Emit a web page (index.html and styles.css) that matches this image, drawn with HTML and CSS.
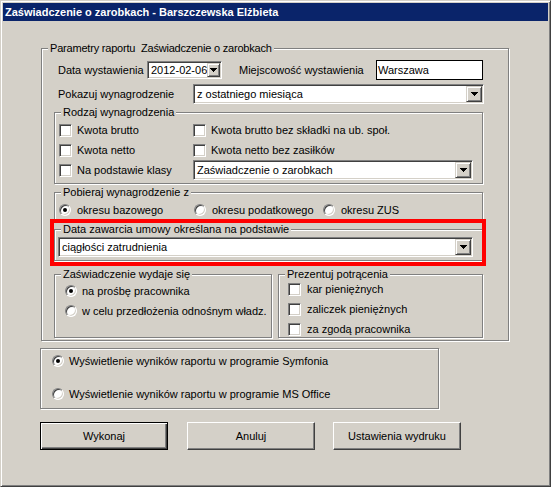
FILE: index.html
```html
<!DOCTYPE html>
<html lang="pl">
<head>
<meta charset="utf-8">
<title>Zaświadczenie o zarobkach</title>
<link rel="stylesheet" href="styles.css">
</head>
<body>
<div class="window">
  <div class="titlebar">Zaświadczenie o zarobkach - Barszczewska Elżbieta</div>
  <div class="client">
    <fieldset class="group outer">
      <legend>Parametry raportu  Zaświadczenie o zarobkach</legend>
      <div class="row r1">
        <span class="l-data">Data wystawienia</span>
        <div class="field date"><span class="val">2012-02-06</span><span class="dd dd-small"><svg width="7" height="4" viewBox="0 0 7 4"><path d="M0 0h7v1H0zM1 1h5v1H1zM2 2h3v1H2zM3 3h1v1H3z"/></svg></span></div>
        <span class="l-miejsc">Miejscowość wystawienia</span>
        <div class="edit">Warszawa</div>
      </div>
      <div class="row r2">
        <span class="l-pokaz">Pokazuj wynagrodzenie</span>
        <div class="field combo c-pokaz"><span class="val">z ostatniego miesiąca</span><span class="dd"><svg width="7" height="4" viewBox="0 0 7 4"><path d="M0 0h7v1H0zM1 1h5v1H1zM2 2h3v1H2zM3 3h1v1H3z"/></svg></span></div>
      </div>

      <fieldset class="group inner rodzaj">
        <legend>Rodzaj wynagrodzenia</legend>
        <div class="grid2">
          <div class="chk"><span class="box"></span>Kwota brutto</div>
          <div class="chk"><span class="box"></span>Kwota brutto bez składki na ub. społ.</div>
          <div class="chk"><span class="box"></span>Kwota netto</div>
          <div class="chk"><span class="box"></span>Kwota netto bez zasiłków</div>
          <div class="chk"><span class="box"></span>Na podstawie klasy</div>
          <div class="field combo c-klasa"><span class="val">Zaświadczenie o zarobkach</span><span class="dd"><svg width="7" height="4" viewBox="0 0 7 4"><path d="M0 0h7v1H0zM1 1h5v1H1zM2 2h3v1H2zM3 3h1v1H3z"/></svg></span></div>
        </div>
      </fieldset>

      <fieldset class="group inner pobieraj">
        <legend>Pobieraj wynagrodzenie z</legend>
        <div class="row pob-row">
          <div class="opt o1"><span class="radio on"></span>okresu bazowego</div>
          <div class="opt o2"><span class="radio"></span>okresu podatkowego</div>
          <div class="opt"><span class="radio"></span>okresu ZUS</div>
        </div>
      </fieldset>

      <fieldset class="group inner zawarcia">
        <legend>Data zawarcia umowy określana na podstawie</legend>
        <div class="field combo c-zawarcia"><span class="val">ciągłości zatrudnienia</span><span class="dd"><svg width="7" height="4" viewBox="0 0 7 4"><path d="M0 0h7v1H0zM1 1h5v1H1zM2 2h3v1H2zM3 3h1v1H3z"/></svg></span></div>
      </fieldset>

      <div class="pair">
        <fieldset class="group zas">
          <legend>Zaświadczenie wydaje się</legend>
          <div class="zas-rows">
            <div class="row"><div class="opt"><span class="radio on"></span>na prośbę pracownika</div></div>
            <div class="row"><div class="opt"><span class="radio"></span>w celu przedłożenia odnośnym władz.</div></div>
          </div>
        </fieldset>
        <fieldset class="group prez">
          <legend>Prezentuj potrącenia</legend>
          <div class="prez-rows">
            <div class="row"><div class="chk wide"><span class="box"></span>kar pieniężnych</div></div>
            <div class="row"><div class="chk wide"><span class="box"></span>zaliczek pieniężnych</div></div>
            <div class="row"><div class="chk wide"><span class="box"></span>za zgodą pracownika</div></div>
          </div>
        </fieldset>
      </div>
    </fieldset>

    <div class="sym">
      <div class="row"><div class="opt"><span class="radio on"></span>Wyświetlenie wyników raportu w programie Symfonia</div></div>
      <div class="row s2"><div class="opt"><span class="radio"></span>Wyświetlenie wyników raportu w programie MS Office</div></div>
    </div>

    <div class="buttons">
      <div class="btn default">Wykonaj</div>
      <div class="btn b2">Anuluj</div>
      <div class="btn b3">Ustawienia wydruku</div>
    </div>
  </div>
  <div class="annot"></div>
</div>
</body>
</html>
```

FILE: styles.css
```css
* { box-sizing: border-box; }
html, body { margin: 0; padding: 0; background: #d4d0c8; }
body {
  font-family: "Liberation Sans", Arial, sans-serif;
  font-size: 11px;
  color: #000;
}

.window {
  position: relative;
  width: 551px;
  height: 487px;
  padding: 2px;
  background: #d4d0c8;
  border: 1px solid;
  border-color: #d4d0c8 #404040 #404040 #d4d0c8;
  box-shadow: inset 1px 1px 0 #fff, inset -1px -1px 0 #808080;
  overflow: hidden;
}

.titlebar {
  height: 18px;
  line-height: 18px;
  padding-left: 2px;
  background: #0a246a;
  color: #fff;
  font-weight: bold;
  white-space: nowrap;
}

.client { padding-left: 37px; }

/* etched group frame */
.group {
  margin: 0;
  padding: 0;
  min-width: 0;
  border: 1px solid #808080;
  box-shadow: inset 1px 1px 0 #fff, 1px 1px 0 #fff;
}
.group > legend {
  margin-left: 6px;
  padding: 0 2px;
  line-height: 13px;
  background: #d4d0c8;
  white-space: pre;
}

.outer { margin: 21px 0 0 1px; width: 468px; padding-bottom: 2px; }
.outer > legend { letter-spacing: -0.2px; }

.row { display: flex; align-items: center; height: 20px; }
.r1 { margin-top: 5px; padding-left: 16px; }
.r2 { margin-top: 4px; padding-left: 16px; }
.l-data { width: 89px; }
.l-miejsc { width: 137px; margin-left: 17px; }
.l-pokaz { width: 135px; }

/* sunken field */
.field {
  display: flex;
  align-items: center;
  padding: 1px;
  background: #fff;
  border: 1px solid;
  border-color: #808080 #fff #fff #808080;
  box-shadow: inset 1px 1px 0 #404040, inset -1px -1px 0 #d4d0c8;
  white-space: nowrap;
}
.field .val { flex: 1; padding-left: 2px; overflow: hidden; }
.combo { height: 20px; }
.date { width: 75px; height: 18px; }
.c-pokaz { width: 291px; }
.c-klasa { width: 280px; }
.c-zawarcia { width: 415px; margin-left: 3px; }

.dd {
  width: 16px;
  height: 16px;
  flex: none;
  display: flex;
  align-items: center;
  justify-content: center;
  background: #d4d0c8;
  border: 1px solid;
  border-color: #d4d0c8 #404040 #404040 #d4d0c8;
  box-shadow: inset 1px 1px 0 #fff, inset -1px -1px 0 #808080;
}
.dd svg { display: block; fill: #000; shape-rendering: crispEdges; }
.dd-small { width: 13px; height: 14px; }

.edit {
  width: 107px;
  height: 20px;
  line-height: 18px;
  padding-left: 1px;
  background: #fff;
  border: 1px solid #000;
}

.inner { margin-left: 12px; width: 429px; }
.rodzaj { margin-top: 2px; padding: 1px 0 3px 0; }
.grid2 {
  display: grid;
  grid-template-columns: 134px 1fr;
  grid-auto-rows: 20px;
  align-items: center;
  margin-left: 4px;
}

.chk, .opt { display: flex; align-items: center; white-space: nowrap; }
.chk { gap: 5px; }
.chk.wide { gap: 6px; }
.opt { gap: 5px; }

.box {
  flex: none;
  width: 13px;
  height: 13px;
  background: #fff;
  border: 1px solid;
  border-color: #808080 #fff #fff #808080;
  box-shadow: inset 1px 1px 0 #404040, inset -1px -1px 0 #d4d0c8;
}
.radio {
  flex: none;
  position: relative;
  width: 12px;
  height: 12px;
  border-radius: 50%;
  background: #fff;
  border: 1px solid;
  border-color: #808080 #fff #fff #808080;
  box-shadow: inset 1px 1px 0 #404040, inset -1px -1px 0 #d4d0c8;
}
.radio.on::after {
  content: "";
  position: absolute;
  left: 3px;
  top: 3px;
  width: 4px;
  height: 4px;
  border-radius: 50%;
  background: #000;
}

.pobieraj { margin-top: 2px; padding: 1px 0 0 0; }
.pob-row { padding-left: 4px; }
.pobieraj .opt { gap: 6px; }
.o1 { width: 135px; }
.o2 { width: 129px; }

.zawarcia { margin-top: 2px; padding: 1px 0 3px 0; }

.pair { display: flex; align-items: stretch; margin: 7px 0 0 12px; }
.zas { width: 218px; }
.zas-rows { padding-left: 10px; }
.prez { width: 205px; margin-left: 6px; }
.prez-rows { margin: -2px 0 -2px; padding-left: 9px; }

.sym {
  width: 399px;
  height: 61px;
  margin-top: 7px;
  padding: 2px 0 0 11px;
  border: 1px solid #808080;
  box-shadow: inset 1px 1px 0 #fff, 1px 1px 0 #fff;
}
.sym .s2 { margin-top: 13px; }

.buttons { display: flex; margin-top: 13px; }
.btn {
  width: 128px;
  height: 28px;
  display: flex;
  align-items: center;
  justify-content: center;
  background: #d4d0c8;
  border: 1px solid;
  border-color: #fff #404040 #404040 #fff;
  box-shadow: inset -1px -1px 0 #808080;
}
.btn.default {
  border-color: #000;
  box-shadow: inset 1px 1px 0 #fff, inset -1px -1px 0 #404040, inset -2px -2px 0 #808080;
}
.b2 { margin-left: 19px; }
.b3 { margin-left: 18px; }

/* red highlight annotation drawn over the dialog */
.annot {
  position: absolute;
  left: 49px;
  top: 218px;
  width: 436px;
  height: 47px;
  border: 4px solid #f00;
}
```
